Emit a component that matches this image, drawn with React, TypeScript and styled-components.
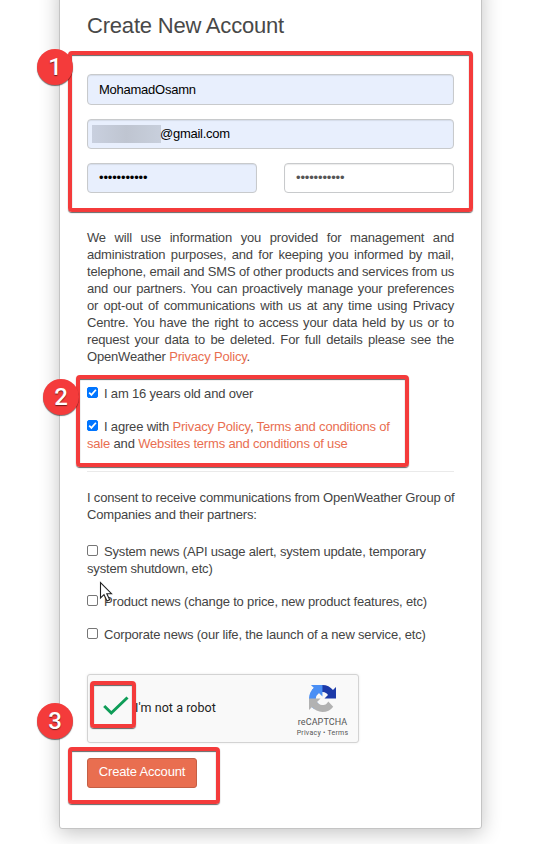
import React from "react";
import styled, { createGlobalStyle } from "styled-components";

const GlobalStyle = createGlobalStyle`
  * { box-sizing: border-box; }
  body {
    margin: 0;
    background: #fff;
    overflow: hidden;
    font-family: "Liberation Sans", Arial, sans-serif;
    font-size: 13px;
    line-height: 17px;
    letter-spacing: -0.18px;
    color: #444;
  }
`;

const Page = styled.main`
  position: relative;
  width: 551px;
  height: 844px;
  overflow: hidden;
`;

const Card = styled.form`
  width: 423px;
  height: 849px;
  margin: -20px 0 0 59px;
  padding: 32px 27px 0;
  border: 1px solid #c4c4c4;
  border-radius: 3px;
  background: #fff;
  box-shadow: 0 4px 20px rgba(0, 0, 0, 0.24);
`;

const Title = styled.h1`
  margin: 0;
  font-size: 22px;
  line-height: 26px;
  font-weight: 400;
  letter-spacing: -0.2px;
  color: #484848;
  white-space: nowrap;
`;

const Fields = styled.div`
  display: grid;
  grid-template-columns: 170px 170px;
  gap: 14px 27px;
  margin-top: 35px;
`;

const Field = styled.div<{ $wide?: boolean; $tall?: boolean; $plain?: boolean; $indent?: number }>`
  grid-column: ${(p) => (p.$wide ? "span 2" : "auto")};
  display: flex;
  align-items: center;
  height: ${(p) => (p.$tall ? 31 : 30)}px;
  padding: 0 0 1px ${(p) => p.$indent ?? 11}px;
  border: 1px solid #c8cacc;
  border-radius: 4px;
  background: ${(p) => (p.$plain ? "#fff" : "#e8effd")};
  box-shadow: inset 0 1px 1px rgba(0, 0, 0, 0.08);
  color: ${(p) => (p.$plain ? "#555" : "#000")};
  letter-spacing: -0.25px;
`;

const Redacted = styled.span`
  width: 69px;
  height: 18px;
  margin-right: -1px;
  background: linear-gradient(90deg, #c9d0df, #bfc5d1 50%, #c8cfdc);
`;

const Dots = styled.span`
  font-size: 13px;
  letter-spacing: -0.15px;
`;

const Notice = styled.p`
  margin: 36px 0 0;
  text-align: justify;
`;

const Link = styled.a`
  color: #e96e50;
`;

const Option = styled.label<{ $gap: number }>`
  display: block;
  margin-top: ${(p) => p.$gap}px;
`;

const Box = styled.span<{ $checked?: boolean }>`
  display: inline-flex;
  width: 11px;
  height: 11px;
  margin-right: 6px;
  vertical-align: ${(p) => (p.$checked ? 1 : 0)}px;
  border: 1px solid ${(p) => (p.$checked ? "#0075ff" : "#767676")};
  border-radius: 2px;
  background: ${(p) => (p.$checked ? "#0075ff" : "#fff")};
`;

const Rule = styled.hr`
  height: 1px;
  margin: 19px 0 17px;
  border: 0;
  background: #eaeaea;
`;

const Consent = styled.p`
  margin: 0;
  white-space: nowrap;
`;

const Captcha = styled.div`
  display: flex;
  justify-content: space-between;
  width: 272px;
  height: 69px;
  margin-top: 31px;
  border: 1px solid #d3d3d3;
  border-radius: 3px;
  background: #f9f9f9;
  box-shadow: 0 0 3px rgba(0, 0, 0, 0.08);
  font-family: Roboto, sans-serif;
`;

const CaptchaPrompt = styled.div`
  display: flex;
  align-items: center;
  padding: 0 0 3px 15px;
  font-size: 12.5px;
  letter-spacing: 0.05px;
  color: #222;
  gap: 6px;

  svg {
    margin-top: -3px;
  }
`;

const CaptchaBrand = styled.div`
  display: flex;
  flex-direction: column;
  align-items: center;
  width: 71px;
  padding-top: 10px;
  line-height: 12px;
  color: #555;
`;

const BrandName = styled.span`
  margin-top: 4px;
  font-size: 9px;
  letter-spacing: 0.1px;
`;

const BrandLinks = styled.span`
  font-size: 7px;
  line-height: 10px;
  letter-spacing: 0.25px;
  white-space: nowrap;
`;

const Submit = styled.button`
  display: block;
  width: 110px;
  height: 30px;
  margin-top: 15px;
  padding: 0 0 3px;
  border: 1px solid #c45f45;
  border-radius: 3px;
  background: #e96e50;
  color: #fff;
  font: 13px "Liberation Sans", Arial, sans-serif;
  letter-spacing: -0.18px;
`;

const Highlight = styled.div<{ $x: number; $y: number; $w: number; $h: number }>`
  position: absolute;
  left: ${(p) => p.$x}px;
  top: ${(p) => p.$y}px;
  width: ${(p) => p.$w}px;
  height: ${(p) => p.$h}px;
  border: 4px solid #f43b3b;
  border-radius: 4px;
  box-shadow: 0 1px 1px rgba(0, 0, 0, 0.6), inset 0 1px 1px rgba(0, 0, 0, 0.6);
`;

const Step = styled.div<{ $x: number; $y: number }>`
  position: absolute;
  left: ${(p) => p.$x}px;
  top: ${(p) => p.$y}px;
  display: flex;
  align-items: center;
  justify-content: center;
  width: 36px;
  height: 36px;
  border-radius: 50%;
  background: #f43b3b;
  box-shadow: 0 1px 1px rgba(0, 0, 0, 0.55);
  color: #fff;
  font: 500 24px/36px Roboto, sans-serif;
  text-shadow: 0 1px 1px rgba(0, 0, 0, 0.55);
`;

const Pointer = styled.svg`
  position: absolute;
  left: 99px;
  top: 581px;
`;

const Check = ({ checked }: { checked?: boolean }) => (
  <Box $checked={checked}>
    {checked && (
      <svg width="9" height="9" viewBox="0 0 9 9">
        <path d="M1.2 4.7 3.4 6.9 7.9 1.7" fill="none" stroke="#fff" strokeWidth="1.7" />
      </svg>
    )}
  </Box>
);

const CaptchaLogo = () => (
  <svg width="27" height="27" viewBox="0 0 64 64">
    <path fill="#1c3aa9" d="M64 31.955a37.9 37.9 0 0 0-.033-1.37V4.687l-7.16 7.16C50.948 4.674 42.033.093 32.05.093c-10.39 0-19.622 4.96-25.458 12.64l11.736 11.86a15.55 15.55 0 0 1 4.754-5.334c2.05-1.6 4.952-2.906 8.968-2.906.485 0 .86.057 1.135.163 4.976.393 9.288 3.14 11.828 7.124l-8.307 8.307L64 31.953" />
    <path fill="#4a8ff5" d="M31.862.094a36 36 0 0 0-1.37.033H4.594l7.16 7.16C4.58 13.147 0 22.06 0 32.046c0 10.39 4.96 19.622 12.64 25.458L24.5 45.768a15.55 15.55 0 0 1-5.334-4.754c-1.6-2.05-2.906-4.952-2.906-8.968 0-.485.057-.86.163-1.135.393-4.976 3.14-9.288 7.124-11.828l8.307 8.307L31.86.095" />
    <path fill="#b2b2b2" d="M0 32.045c0 .46.012.916.033 1.37v25.898l7.16-7.16c5.86 7.173 14.774 11.754 24.76 11.754 10.39 0 19.622-4.96 25.458-12.64l-11.736-11.86a15.55 15.55 0 0 1-4.754 5.334c-2.05 1.6-4.952 2.906-8.968 2.906-.485 0-.86-.057-1.135-.163-4.976-.393-9.288-3.14-11.828-7.124l8.307-8.307L0 32.048" />
  </svg>
);

export default function App() {
  return (
    <>
      <GlobalStyle />
      <Page>
        <Card>
          <Title>Create New Account</Title>
          <Fields>
            <Field $wide $tall>MohamadOsamn</Field>
            <Field $wide $indent={4}><Redacted />@gmail.com</Field>
            <Field><Dots>•••••••••••</Dots></Field>
            <Field $plain><Dots>•••••••••••</Dots></Field>
          </Fields>
          <Notice>
            We will use information you provided for management and administration purposes, and for
            keeping you informed by mail, telephone, email and SMS of other products and services from
            us and our partners. You can proactively manage your preferences or opt-out of
            communications with us at any time using Privacy Centre. You have the right to access your
            data held by us or to request your data to be deleted. For full details please see the
            OpenWeather <Link>Privacy Policy</Link>.
          </Notice>
          <Option $gap={20}><Check checked />I am 16 years old and over</Option>
          <Option $gap={16}>
            <Check checked />I agree with <Link>Privacy Policy</Link>, <Link>Terms and conditions of<br />sale</Link> and{" "}
            <Link>Websites terms and conditions of use</Link>
          </Option>
          <Rule />
          <Consent>I consent to receive communications from OpenWeather Group of<br />Companies and their partners:</Consent>
          <Option $gap={20}>
            <Check />System news (API usage alert, system update, temporary<br />system shutdown, etc)
          </Option>
          <Option $gap={16}><Check />Product news (change to price, new product features, etc)</Option>
          <Option $gap={16}><Check />Corporate news (our life, the launch of a new service, etc)</Option>
          <Captcha>
            <CaptchaPrompt>
              <svg width="26" height="20" viewBox="0 0 26 20">
                <path d="M1.2 10 8.3 17 24.5 1.5" fill="none" stroke="#0f9d58" strokeWidth="3" />
              </svg>
              I'm not a robot
            </CaptchaPrompt>
            <CaptchaBrand>
              <CaptchaLogo />
              <BrandName>reCAPTCHA</BrandName>
              <BrandLinks>Privacy • Terms</BrandLinks>
            </CaptchaBrand>
          </Captcha>
          <Submit type="button">Create Account</Submit>
        </Card>
        <Highlight $x={68} $y={51} $w={405} $h={161} />
        <Highlight $x={76} $y={375} $w={333} $h={92} />
        <Highlight $x={90} $y={681} $w={46} $h={47} />
        <Highlight $x={68} $y={747} $w={152} $h={57} />
        <Step $x={37} $y={49}>1</Step>
        <Step $x={43} $y={379}>2</Step>
        <Step $x={37} $y={703}>3</Step>
        <Pointer width="14" height="22" viewBox="0 0 14 22">
          <path d="M1.5 1.5V17l3.5-3.3 3 6.3 2.7-1.3-2.9-6H12.500Z" fill="#fff" stroke="#222" strokeWidth="1.1" />
        </Pointer>
      </Page>
    </>
  );
}
